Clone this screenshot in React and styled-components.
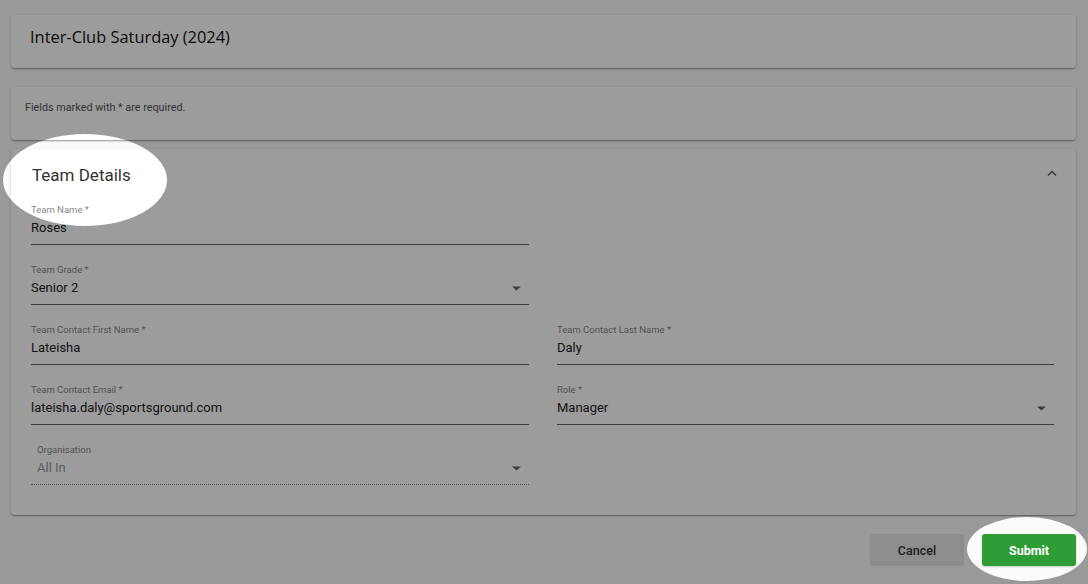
import React from 'react'
import styled, { createGlobalStyle } from 'styled-components'

const GlobalStyle = createGlobalStyle`
	html, body {
		margin: 0;
		padding: 0;
		background: #fbfbfb;
		font-family: Roboto, 'Liberation Sans', Arial, sans-serif;
	}
`

const fields = [
	{ label: 'Team Name *', value: 'Roses' },
	{ label: null },
	{ label: 'Team Grade *', value: 'Senior 2', select: true },
	{ label: null },
	{ label: 'Team Contact First Name *', value: 'Lateisha' },
	{ label: 'Team Contact Last Name *', value: 'Daly' },
	{ label: 'Team Contact Email *', value: 'lateisha.daly@sportsground.com' },
	{ label: 'Role *', value: 'Manager', select: true },
	{ label: 'Organisation', value: 'All In', select: true, disabled: true },
]

export default function App() {
	return (
		<>
			<GlobalStyle />
			<Page>
				<Card height={53} center>
					<Title>Inter-Club Saturday (2024)</Title>
				</Card>
				<Card height={53}>
					<Note>Fields marked with * are required.</Note>
				</Card>
				<DetailsCard>
					<DetailsHeader>
						<SectionTitle>Team Details</SectionTitle>
						<Chevron width="12" height="8" viewBox="0 0 12 8">
							<path d="M2 6.5 L6 2.5 L10 6.5" fill="none" stroke="#555" strokeWidth="1.4" />
						</Chevron>
					</DetailsHeader>
					<FieldGrid>
						{fields.map((f, i) =>
							f.label ? (
								<Field key={i} disabled={f.disabled}>
									<Label disabled={f.disabled}>{f.label}</Label>
									<Value disabled={f.disabled}>
										<span>{f.value}</span>
										{f.select && <Arrow />}
									</Value>
								</Field>
							) : (
								<div key={i} />
							)
						)}
					</FieldGrid>
				</DetailsCard>
				<Actions>
					<Button>Cancel</Button>
					<Button primary>Submit</Button>
				</Actions>
			</Page>
			<Overlay width="100%" height="100%">
				<defs>
					<mask id="spot">
						<rect width="100%" height="100%" fill="white" />
						<ellipse cx="85" cy="180" rx="82" ry="46" fill="black" />
						<ellipse cx="1027" cy="549" rx="60" ry="32" fill="black" />
					</mask>
				</defs>
				<rect width="100%" height="100%" fill="rgba(0,0,0,0.39)" mask="url(#spot)" />
			</Overlay>
		</>
	)
}

const Arrow = () => (
	<svg width="9" height="5" viewBox="0 0 9 5">
		<path d="M0 0.5 L9 0.5 L4.5 4.5 Z" fill="#666" />
	</svg>
)

const Page = styled.div`
	width: 1088px;
	height: 584px;
	box-sizing: border-box;
	padding: 15px 12px 0 11px;
	display: flex;
	flex-direction: column;
`

const Card = styled.div`
	background: #fff;
	border-radius: 4px;
	box-shadow: 0 1px 3px rgba(0, 0, 0, 0.2), 0 1px 1px rgba(0, 0, 0, 0.14), 0 2px 1px -1px rgba(0, 0, 0, 0.12);
	height: ${p => p.height}px;
	box-sizing: border-box;
	display: flex;
	align-items: ${p => (p.center ? 'center' : 'flex-start')};
	padding: ${p => (p.center ? '0 19px 10px' : '14px 14px')};
	margin-bottom: 19px;
	& + & {
		margin-bottom: 9px;
	}
`

const Title = styled.div`
	font-family: 'Open Sans', 'Liberation Sans', sans-serif;
	font-size: 16.4px;
	color: #111;
`

const Note = styled.div`
	font-size: 10.8px;
	color: #555;
`

const DetailsCard = styled.div`
	background: #fff;
	border-radius: 4px;
	box-shadow: 0 1px 3px rgba(0, 0, 0, 0.2), 0 1px 1px rgba(0, 0, 0, 0.14), 0 2px 1px -1px rgba(0, 0, 0, 0.12);
	padding: 15px 22px 30px 20px;
	height: 366px;
	box-sizing: border-box;
`

const DetailsHeader = styled.div`
	display: flex;
	justify-content: space-between;
	align-items: center;
	height: 22px;
	padding-left: 1px;
	margin-right: -4px;
	margin-bottom: 17px;
`

const Chevron = styled.svg`
	margin-top: -4px;
`

const SectionTitle = styled.div`
	font-size: 17px;
	color: #333;
	line-height: 22px;
`

const FieldGrid = styled.div`
	display: grid;
	grid-template-columns: 498px 497px;
	column-gap: 28px;
	row-gap: 18px;
`

const Field = styled.div`
	border-bottom: 1px ${p => (p.disabled ? 'dotted #888' : 'solid #666')};
	padding-left: ${p => (p.disabled ? '6px' : '0')};
	padding-top: 1px;
	padding-bottom: 7px;
	height: 42px;
	box-sizing: border-box;
	display: flex;
	flex-direction: column;
`

const Label = styled.div`
	font-size: 9.5px;
	line-height: 12px;
	color: #888;
	margin-bottom: 3px;
`

const Value = styled.div`
	font-size: 13px;
	line-height: 18px;
	color: ${p => (p.disabled ? '#999' : '#222')};
	display: flex;
	align-items: center;
	justify-content: space-between;
	padding-right: 8px;
`

const Actions = styled.div`
	display: flex;
	justify-content: flex-end;
	gap: 18px;
	margin-top: 19px;
`

const Button = styled.button`
	width: 94px;
	height: 32px;
	border: none;
	border-radius: 3px;
	font-family: Roboto, 'Liberation Sans', sans-serif;
	font-size: 12.5px;
	font-weight: ${p => (p.primary ? 700 : 500)};
	background: ${p => (p.primary ? '#2e9d36' : '#e6e6e6')};
	color: ${p => (p.primary ? '#fff' : '#333')};
	box-shadow: ${p => (p.primary ? '0 1px 2px rgba(0,0,0,0.2)' : 'none')};
`

const Overlay = styled.svg`
	position: fixed;
	inset: 0;
	pointer-events: none;
`
